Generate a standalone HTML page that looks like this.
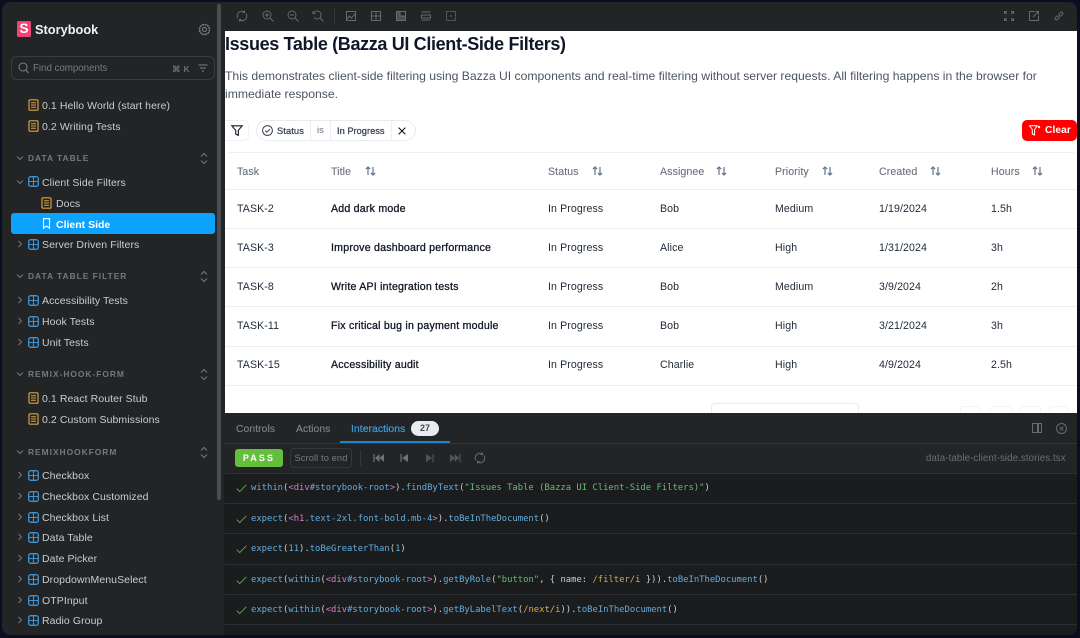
<!DOCTYPE html>
<html><head><meta charset="utf-8"><style>
*{box-sizing:border-box}
html,body{margin:0;padding:0;width:1080px;height:638px;overflow:hidden;background:#0a0e1f;font-family:"Liberation Sans",sans-serif}
.a,.t{position:absolute}
.t{white-space:nowrap;line-height:14px;height:14px}
.s{font-size:10.5px;color:#c9cdcf;letter-spacing:.08px;margin-top:1px}
.h{font-size:8.4px;font-weight:700;color:#74797e;letter-spacing:1px}
.c{font-size:10.6px;color:#6b7280;letter-spacing:.1px;margin-top:1px;-webkit-text-stroke:.12px #6b7280}
.d{font-size:10.6px;color:#1f2937;letter-spacing:.1px;margin-top:1px}
.b{font-size:10.6px;color:#111827;letter-spacing:.22px;margin-top:1px;-webkit-text-stroke:.3px #111827}
.m{font-family:"DejaVu Sans Mono","Liberation Mono",monospace;font-size:8.87px;color:#c9cdcf}
.l{color:#62aee0}.p{color:#d080c2}.g{color:#66bd72}.y{color:#d0ab62}.w{color:#c9cdcf}
.ln{position:absolute;height:1px;background:#eceef1;left:225px;width:852px}
.rl{position:absolute;left:225px;width:852px;height:1px;background:#2d2f31}
.tb{font-size:10.4px;color:#7e8387;letter-spacing:.05px;-webkit-text-stroke:.15px #7e8387}
svg{position:absolute;overflow:visible;fill:none}
.ti{stroke:#666b6f;stroke-width:1}
</style></head><body>
<svg width="0" height="0" style="position:absolute">
<defs>
<symbol id="doc" viewBox="0 0 11 12"><rect x="1" y=".8" width="9" height="10.4" rx="1" fill="none" stroke="#d9a13c" stroke-width="1.2"/><path d="M3 3.8h5M3 6h5M3 8.2h5" stroke="#d9a13c" stroke-width="1"/></symbol>
<symbol id="cmp" viewBox="0 0 11 11"><rect x=".7" y=".7" width="9.6" height="9.6" rx="2" fill="none" stroke="#3d94d6" stroke-width="1.3"/><path d="M5.5 1v9M1 5.5h9" stroke="#3d94d6" stroke-width="1.1"/></symbol>
<symbol id="rt" viewBox="0 0 6 8"><path d="M1.5 1l3 3-3 3" fill="none" stroke="#74797e" stroke-width="1"/></symbol>
<symbol id="dn" viewBox="0 0 8 6"><path d="M1 1.5l3 3 3-3" fill="none" stroke="#74797e" stroke-width="1"/></symbol>
<symbol id="ud" viewBox="0 0 8 13"><path d="M1 4.5l3-3 3 3M1 8.5l3 3 3-3" fill="none" stroke="#74797e" stroke-width="1"/></symbol>
<symbol id="sort" viewBox="0 0 11 10"><path d="M3 9V1M.9 3.1L3 1l2.100 2.100M8 1v8M5.900 6.900L8 9l2.100-2.100" fill="none" stroke="#64748b" stroke-width="1.200"/></symbol>
<symbol id="ck" viewBox="0 0 11 9"><path d="M.7 4.600l3 3L10.300.8" fill="none" stroke="#62a542" stroke-width=".9"/></symbol>
</defs></svg>

<!-- window -->
<div class="a" style="left:2px;top:2px;width:1075px;height:633px;background:#222425;border-radius:8px;overflow:hidden"></div>

<!-- sidebar -->
<div class="a" style="left:17px;top:21px;width:14px;height:16px;background:#ef4474;border-radius:1.5px"></div>
<div class="t" style="left:19.500px;top:22px;font-size:13.500px;font-weight:700;color:#fff">S</div>
<div class="t" style="left:35px;top:23px;font-size:12.800px;font-weight:700;color:#f1f2f3">Storybook</div>
<svg style="left:198px;top:23px" width="13" height="13" viewBox="0 0 13 13"><circle cx="6.500" cy="6.500" r="2" stroke="#7e8387"/><circle cx="6.500" cy="6.500" r="5" stroke="#7e8387" stroke-width="1.400" stroke-dasharray="2 .6"/></svg>

<div class="a" style="left:11px;top:56px;width:204px;height:24px;border:1px solid #3a3d40;border-radius:6px"></div>
<svg style="left:18px;top:62px" width="11" height="12" viewBox="0 0 11 12"><circle cx="5" cy="5" r="4" stroke="#7e8387"/><path d="M8 8l2.500 3" stroke="#7e8387"/></svg>
<div class="t" style="left:33px;top:62px;font-size:9.800px;color:#767b80;letter-spacing:-.05px">Find components</div>
<div class="t" style="left:172px;top:62px;font-size:8.500px;color:#696e72;letter-spacing:.3px;font-weight:700">⌘ K</div>
<svg style="left:198px;top:64px" width="10" height="8" viewBox="0 0 10 8"><path d="M.5 1h9M2 4h6M4 7h2" stroke="#7e8387"/></svg>

<svg style="left:28px;top:99px" width="11" height="12"><use href="#doc"/></svg><div class="t s" style="left:42px;top:98px">0.1 Hello World (start here)</div>
<svg style="left:28px;top:120px" width="11" height="12"><use href="#doc"/></svg><div class="t s" style="left:42px;top:119px">0.2 Writing Tests</div>

<svg style="left:16px;top:155px" width="8" height="6"><use href="#dn"/></svg><div class="t h" style="left:28px;top:151px">DATA TABLE</div><svg style="left:200px;top:152px" width="8" height="13"><use href="#ud"/></svg>
<svg style="left:16px;top:179px" width="8" height="6"><use href="#dn"/></svg><svg style="left:28px;top:176px" width="11" height="11"><use href="#cmp"/></svg><div class="t s" style="left:42px;top:175px">Client Side Filters</div>
<svg style="left:41px;top:197px" width="11" height="12"><use href="#doc"/></svg><div class="t s" style="left:56px;top:196px">Docs</div>
<div class="a" style="left:11px;top:213px;width:204px;height:21px;background:#0ea2ff;border-radius:3px"></div>
<svg style="left:42px;top:218px" width="9" height="11" viewBox="0 0 9 11"><path d="M1.500.7h6v9.500L4.500 8l-3 2.200z" stroke="#fff" stroke-width="1.100"/></svg><div class="t s" style="left:56px;top:217px;color:#fff;font-weight:700;letter-spacing:0">Client Side</div>
<svg style="left:17px;top:240px" width="6" height="8"><use href="#rt"/></svg><svg style="left:28px;top:239px" width="11" height="11"><use href="#cmp"/></svg><div class="t s" style="left:42px;top:237px">Server Driven Filters</div>

<svg style="left:16px;top:273px" width="8" height="6"><use href="#dn"/></svg><div class="t h" style="left:28px;top:269px">DATA TABLE FILTER</div><svg style="left:200px;top:270px" width="8" height="13"><use href="#ud"/></svg>
<svg style="left:17px;top:296px" width="6" height="8"><use href="#rt"/></svg><svg style="left:28px;top:295px" width="11" height="11"><use href="#cmp"/></svg><div class="t s" style="left:42px;top:293px">Accessibility Tests</div>
<svg style="left:17px;top:317px" width="6" height="8"><use href="#rt"/></svg><svg style="left:28px;top:316px" width="11" height="11"><use href="#cmp"/></svg><div class="t s" style="left:42px;top:314px">Hook Tests</div>
<svg style="left:17px;top:338px" width="6" height="8"><use href="#rt"/></svg><svg style="left:28px;top:337px" width="11" height="11"><use href="#cmp"/></svg><div class="t s" style="left:42px;top:335px">Unit Tests</div>

<svg style="left:16px;top:371px" width="8" height="6"><use href="#dn"/></svg><div class="t h" style="left:28px;top:367px">REMIX-HOOK-FORM</div><svg style="left:200px;top:368px" width="8" height="13"><use href="#ud"/></svg>
<svg style="left:28px;top:392px" width="11" height="12"><use href="#doc"/></svg><div class="t s" style="left:42px;top:391px">0.1 React Router Stub</div>
<svg style="left:28px;top:413px" width="11" height="12"><use href="#doc"/></svg><div class="t s" style="left:42px;top:412px">0.2 Custom Submissions</div>

<svg style="left:16px;top:449px" width="8" height="6"><use href="#dn"/></svg><div class="t h" style="left:28px;top:445px">REMIXHOOKFORM</div><svg style="left:200px;top:446px" width="8" height="13"><use href="#ud"/></svg>
<svg style="left:17px;top:471px" width="6" height="8"><use href="#rt"/></svg><svg style="left:28px;top:470px" width="11" height="11"><use href="#cmp"/></svg><div class="t s" style="left:42px;top:468px">Checkbox</div>
<svg style="left:17px;top:492px" width="6" height="8"><use href="#rt"/></svg><svg style="left:28px;top:491px" width="11" height="11"><use href="#cmp"/></svg><div class="t s" style="left:42px;top:489px">Checkbox Customized</div>
<svg style="left:17px;top:513px" width="6" height="8"><use href="#rt"/></svg><svg style="left:28px;top:512px" width="11" height="11"><use href="#cmp"/></svg><div class="t s" style="left:42px;top:510px">Checkbox List</div>
<svg style="left:17px;top:533px" width="6" height="8"><use href="#rt"/></svg><svg style="left:28px;top:532px" width="11" height="11"><use href="#cmp"/></svg><div class="t s" style="left:42px;top:530px">Data Table</div>
<svg style="left:17px;top:554px" width="6" height="8"><use href="#rt"/></svg><svg style="left:28px;top:553px" width="11" height="11"><use href="#cmp"/></svg><div class="t s" style="left:42px;top:551px">Date Picker</div>
<svg style="left:17px;top:575px" width="6" height="8"><use href="#rt"/></svg><svg style="left:28px;top:574px" width="11" height="11"><use href="#cmp"/></svg><div class="t s" style="left:42px;top:572px">DropdownMenuSelect</div>
<svg style="left:17px;top:596px" width="6" height="8"><use href="#rt"/></svg><svg style="left:28px;top:595px" width="11" height="11"><use href="#cmp"/></svg><div class="t s" style="left:42px;top:593px">OTPInput</div>
<svg style="left:17px;top:616px" width="6" height="8"><use href="#rt"/></svg><svg style="left:28px;top:615px" width="11" height="11"><use href="#cmp"/></svg><div class="t s" style="left:42px;top:613px">Radio Group</div>

<div class="a" style="left:217px;top:4px;width:4px;height:496px;background:#4a4d50;border-radius:2px"></div>

<!-- top toolbar -->
<div class="a" style="left:334px;top:8px;width:1px;height:16px;background:#35383a"></div>
<svg class="ti" style="left:236px;top:10px" width="12" height="12" viewBox="0 0 12 12"><path d="M2 8.500A4.700 4.700 0 0 1 8.500 2M10 3.500A4.700 4.700 0 0 1 3.500 10M8.500.5V2.500H6.500M3.500 11.500V9.500H5.500"/></svg>
<svg class="ti" style="left:262px;top:10px" width="12" height="12" viewBox="0 0 12 12"><circle cx="5" cy="5" r="4"/><path d="M8 8l3.500 3.500M3 5h4M5 3v4"/></svg>
<svg class="ti" style="left:287px;top:10px" width="12" height="12" viewBox="0 0 12 12"><circle cx="5" cy="5" r="4"/><path d="M8 8l3.500 3.500M3 5h4"/></svg>
<svg class="ti" style="left:312px;top:10px" width="12" height="12" viewBox="0 0 12 12"><path d="M2 2.500A4 4 0 1 1 2 7.500M8 8l3.500 3.500M1 1v2.500h2.500"/></svg>
<svg class="ti" style="left:346px;top:11px" width="10" height="10" viewBox="0 0 10 10"><rect x=".5" y=".5" width="9" height="9"/><path d="M1 8l2.500-3 2 2L9 3"/></svg>
<svg class="ti" style="left:371px;top:11px" width="10" height="10" viewBox="0 0 10 10"><rect x=".5" y=".5" width="9" height="9"/><path d="M5 .5v9M.5 5h9"/></svg>
<svg class="ti" style="left:396px;top:11px" width="10" height="10" viewBox="0 0 10 10"><rect x=".5" y=".5" width="9" height="9" fill="#4b4f52"/><rect x="4" y=".5" width="5.500" height="4.500" fill="#222425"/></svg>
<svg class="ti" style="left:421px;top:11px" width="10" height="10" viewBox="0 0 10 10"><path d="M.5 1h9M.5 9h9M.5 4h9v3H.5z"/></svg>
<svg class="ti" style="left:446px;top:11px" width="10" height="10" viewBox="0 0 10 10"><rect x=".5" y=".5" width="9" height="9" stroke-dasharray="2 1"/><path d="M5 4v2"/></svg>
<svg class="ti" style="left:1004px;top:11px" width="10" height="10" viewBox="0 0 10 10"><path d="M.5 3V.5H3M7 .5h2.500V3M9.500 7v2.500H7M3 9.500H.5V7M1 1l2 2M9 1L7 3M9 9L7 7M1 9l2-2"/></svg>
<svg class="ti" style="left:1029px;top:11px" width="10" height="10" viewBox="0 0 10 10"><path d="M5.500.5H.5v9h9v-5M4 6L9.500.5M6.500.5h3v3"/></svg>
<svg class="ti" style="left:1054px;top:11px" width="10" height="10" viewBox="0 0 10 10"><path d="M4 6L6 4M3.500 4.500L1.500 6.500a1.400 1.400 0 0 0 2 2L5.500 6.500M4.500 3.500l2-2a1.400 1.400 0 0 1 2 2L6.500 5.500"/></svg>

<!-- preview -->
<div class="a" style="left:225px;top:31px;width:852px;height:382px;background:#fff"></div>
<div class="t" style="left:225px;top:33px;height:22px;line-height:22px;font-size:18px;font-weight:700;color:#0f172a;letter-spacing:-.35px">Issues Table (Bazza UI Client-Side Filters)</div>
<div class="t" style="left:225px;top:69px;font-size:12.180px;color:#4b5563">This demonstrates client-side filtering using Bazza UI components and real-time filtering without server requests. All filtering happens in the browser for</div>
<div class="t" style="left:225px;top:87px;font-size:12.180px;color:#4b5563">immediate response.</div>

<div class="a" style="left:225px;top:120px;width:24px;height:21px;border:1px solid #f0f1f3;border-left:0;border-radius:0 5px 5px 0"></div>
<svg style="left:231px;top:125px" width="12" height="11" viewBox="0 0 12 11"><path d="M.8.8h10.400L7.300 5.300v5L4.700 9V5.300z" stroke="#111827" stroke-width="1.100"/></svg>
<div class="a" style="left:256px;top:120px;width:160px;height:21px;border:1px solid #e8eaed;border-radius:11px"></div>
<div class="a" style="left:310px;top:120px;width:1px;height:21px;background:#eceef1"></div>
<div class="a" style="left:330px;top:120px;width:1px;height:21px;background:#eceef1"></div>
<div class="a" style="left:391px;top:120px;width:1px;height:21px;background:#eceef1"></div>
<svg style="left:262px;top:125px" width="11" height="11" viewBox="0 0 11 11"><circle cx="5.500" cy="5.500" r="4.900" stroke="#374151"/><path d="M3.300 5.600l1.600 1.600 2.900-3" stroke="#374151"/></svg>
<div class="t" style="left:277px;top:124px;font-size:9.300px;color:#374151;letter-spacing:.1px;-webkit-text-stroke:.25px #374151">Status</div>
<div class="t" style="left:317px;top:124px;font-size:9.500px;color:#6b7280">is</div>
<div class="t" style="left:337px;top:124px;font-size:9.300px;color:#374151;-webkit-text-stroke:.25px #374151">In Progress</div>
<svg style="left:398px;top:127px" width="8" height="8" viewBox="0 0 8 8"><path d="M.6.6l6.800 6.800M7.400.6L.6 7.400" stroke="#111827" stroke-width="1.100"/></svg>
<div class="a" style="left:1022px;top:120px;width:55px;height:21px;background:#fe0000;border-radius:5px"></div>
<svg style="left:1029px;top:125px" width="12" height="11" viewBox="0 0 12 11"><path d="M.6.8h7.500L5.600 4.500v5.500L3.300 9V4.500zM9 1l2 2M11 1L9 3" stroke="#fff" stroke-width="1"/></svg>
<div class="t" style="left:1045px;top:123.500px;font-size:10.200px;font-weight:700;color:#fff;letter-spacing:.1px">Clear</div>

<!-- table -->
<div class="a" style="left:225px;top:152px;width:852px;height:233px;border-top:1px solid #eceef1;border-radius:5px"></div>
<div class="ln" style="top:189px"></div><div class="ln" style="top:228px"></div><div class="ln" style="top:267px"></div><div class="ln" style="top:306px"></div><div class="ln" style="top:346px"></div><div class="ln" style="top:385px"></div>
<div class="t c" style="left:237px;top:164px">Task</div>
<div class="t c" style="left:331px;top:164px">Title</div><svg style="left:365px;top:166px" width="11" height="10"><use href="#sort"/></svg>
<div class="t c" style="left:548px;top:164px">Status</div><svg style="left:592px;top:166px" width="11" height="10"><use href="#sort"/></svg>
<div class="t c" style="left:660px;top:164px">Assignee</div><svg style="left:716px;top:166px" width="11" height="10"><use href="#sort"/></svg>
<div class="t c" style="left:775px;top:164px">Priority</div><svg style="left:822px;top:166px" width="11" height="10"><use href="#sort"/></svg>
<div class="t c" style="left:879px;top:164px">Created</div><svg style="left:930px;top:166px" width="11" height="10"><use href="#sort"/></svg>
<div class="t c" style="left:991px;top:164px">Hours</div><svg style="left:1032px;top:166px" width="11" height="10"><use href="#sort"/></svg>

<div class="t d" style="left:237px;top:201px">TASK-2</div><div class="t b" style="left:331px;top:201px">Add dark mode</div><div class="t d" style="left:548px;top:201px">In Progress</div><div class="t d" style="left:660px;top:201px">Bob</div><div class="t d" style="left:775px;top:201px">Medium</div><div class="t d" style="left:879px;top:201px">1/19/2024</div><div class="t d" style="left:991px;top:201px">1.5h</div>
<div class="t d" style="left:237px;top:240px">TASK-3</div><div class="t b" style="left:331px;top:240px">Improve dashboard performance</div><div class="t d" style="left:548px;top:240px">In Progress</div><div class="t d" style="left:660px;top:240px">Alice</div><div class="t d" style="left:775px;top:240px">High</div><div class="t d" style="left:879px;top:240px">1/31/2024</div><div class="t d" style="left:991px;top:240px">3h</div>
<div class="t d" style="left:237px;top:279px">TASK-8</div><div class="t b" style="left:331px;top:279px">Write API integration tests</div><div class="t d" style="left:548px;top:279px">In Progress</div><div class="t d" style="left:660px;top:279px">Bob</div><div class="t d" style="left:775px;top:279px">Medium</div><div class="t d" style="left:879px;top:279px">3/9/2024</div><div class="t d" style="left:991px;top:279px">2h</div>
<div class="t d" style="left:237px;top:318px">TASK-11</div><div class="t b" style="left:331px;top:318px">Fix critical bug in payment module</div><div class="t d" style="left:548px;top:318px">In Progress</div><div class="t d" style="left:660px;top:318px">Bob</div><div class="t d" style="left:775px;top:318px">High</div><div class="t d" style="left:879px;top:318px">3/21/2024</div><div class="t d" style="left:991px;top:318px">3h</div>
<div class="t d" style="left:237px;top:357px">TASK-15</div><div class="t b" style="left:331px;top:357px">Accessibility audit</div><div class="t d" style="left:548px;top:357px">In Progress</div><div class="t d" style="left:660px;top:357px">Charlie</div><div class="t d" style="left:775px;top:357px">High</div><div class="t d" style="left:879px;top:357px">4/9/2024</div><div class="t d" style="left:991px;top:357px">2.5h</div>

<div class="a" style="left:711px;top:403px;width:148px;height:12px;border:1px solid #e8eaed;border-radius:4px 4px 0 0"></div>
<div class="a" style="left:960px;top:406px;width:20px;height:9px;border:1px solid #f3f4f6;border-radius:3px 3px 0 0"></div>
<div class="a" style="left:990px;top:406px;width:22px;height:9px;border:1px solid #f3f4f6;border-radius:3px 3px 0 0"></div>
<div class="a" style="left:1019px;top:406px;width:22px;height:9px;border:1px solid #f3f4f6;border-radius:3px 3px 0 0"></div>
<div class="a" style="left:1049px;top:406px;width:20px;height:9px;border:1px solid #f3f4f6;border-radius:3px 3px 0 0"></div>

<!-- panel -->
<div class="a" style="left:224px;top:413px;width:853px;height:222px;background:#222425;border-radius:0 0 8px 0;overflow:hidden">
<div class="a" style="left:0;top:60px;width:853px;height:162px;background:#1b1c1e"></div>
</div>
<div class="rl" style="top:443px;background:#333537"></div>
<div class="rl" style="top:473px"></div>
<div class="rl" style="top:503px"></div>
<div class="rl" style="top:533px"></div>
<div class="rl" style="top:564px"></div>
<div class="rl" style="top:594px"></div>
<div class="rl" style="top:624px"></div>

<div class="t tb" style="left:236px;top:423px">Controls</div>
<div class="t tb" style="left:296px;top:423px">Actions</div>
<div class="t tb" style="left:351px;top:423px;color:#3b9fe0;-webkit-text-stroke:.2px #3b9fe0">Interactions</div>
<div class="a" style="left:411px;top:421px;width:28px;height:15px;background:#e8ebf0;border-radius:8px;color:#44484c;font-size:9px;font-weight:700;text-align:center;line-height:15px">27</div>
<div class="a" style="left:340px;top:441px;width:110px;height:2px;background:#1a86cf"></div>
<svg class="ti" style="left:1032px;top:423px" width="10" height="10" viewBox="0 0 10 10"><rect x=".5" y=".5" width="9" height="9"/><path d="M6 .5v9" stroke-width="2"/></svg>
<svg class="ti" style="left:1056px;top:423px" width="11" height="11" viewBox="0 0 11 11"><circle cx="5.500" cy="5.500" r="5"/><path d="M3.700 3.700l3.600 3.600M7.300 3.700L3.700 7.300"/></svg>

<div class="a" style="left:235px;top:449px;width:48px;height:18px;background:#66bf3c;border-radius:3px;color:#fff;font-size:9px;font-weight:700;letter-spacing:2.100px;text-align:center;line-height:18px">PASS</div>
<div class="a" style="left:290px;top:448px;width:62px;height:20px;border:1px solid #36393b;border-radius:4px;color:#767b80;font-size:9.300px;letter-spacing:.1px;text-align:center;line-height:18px">Scroll to end</div>
<div class="a" style="left:360px;top:450px;width:1px;height:16px;background:#35383a"></div>
<svg style="left:373px;top:453px" width="12" height="10" viewBox="0 0 12 10"><path d="M1 1v8" stroke="#6e7377" stroke-width="1.200"/><path d="M6.500 1L2 5l4.500 4zM11 1L6.500 5 11 9z" fill="#6e7377"/></svg>
<svg style="left:400px;top:453px" width="9" height="10" viewBox="0 0 9 10"><path d="M1 1v8" stroke="#6e7377" stroke-width="1.200"/><path d="M8 1L2 5l6 4z" fill="#6e7377"/></svg>
<svg style="left:425px;top:453px" width="9" height="10" viewBox="0 0 9 10"><path d="M8 1v8" stroke="#4f5356" stroke-width="1.200"/><path d="M1 1l6 4-6 4z" fill="#4f5356"/></svg>
<svg style="left:449px;top:453px" width="12" height="10" viewBox="0 0 12 10"><path d="M11 1v8" stroke="#4f5356" stroke-width="1.200"/><path d="M1 1l5 4-5 4zM5.500 1l5 4-5 4z" fill="#4f5356"/></svg>
<svg class="ti" style="left:474px;top:452px" width="12" height="12" viewBox="0 0 12 12"><path d="M2 8.500A4.700 4.700 0 0 1 8.500 2M10 3.500A4.700 4.700 0 0 1 3.500 10M8.500.5V2.500H6.500M3.500 11.500V9.500H5.500"/></svg>
<div class="t" style="left:926px;top:452px;font-size:9.700px;color:#6b7075;letter-spacing:.1px">data-table-client-side.stories.tsx</div>

<svg style="left:236px;top:484px" width="11" height="9"><use href="#ck"/></svg>
<div class="t m" style="left:251px;top:481px"><span class="l">within</span>(<span class="p">&lt;div</span><span class="l">#storybook-root</span><span class="p">&gt;</span>).<span class="l">findByText</span>(<span class="g">"Issues Table (Bazza UI Client-Side Filters)"</span>)</div>
<svg style="left:236px;top:515px" width="11" height="9"><use href="#ck"/></svg>
<div class="t m" style="left:251px;top:512px"><span class="l">expect</span>(<span class="p">&lt;h1</span><span class="l">.text-2xl.font-bold.mb-4</span><span class="p">&gt;</span>).<span class="l">toBeInTheDocument</span>()</div>
<svg style="left:236px;top:545px" width="11" height="9"><use href="#ck"/></svg>
<div class="t m" style="left:251px;top:542px"><span class="l">expect</span>(<span class="l">11</span>).<span class="l">toBeGreaterThan</span>(<span class="l">1</span>)</div>
<svg style="left:236px;top:576px" width="11" height="9"><use href="#ck"/></svg>
<div class="t m" style="left:251px;top:573px"><span class="l">expect</span>(<span class="l">within</span>(<span class="p">&lt;div</span><span class="l">#storybook-root</span><span class="p">&gt;</span>).<span class="l">getByRole</span>(<span class="g">"button"</span>, { name: <span class="y">/filter/i</span> })).<span class="l">toBeInTheDocument</span>()</div>
<svg style="left:236px;top:606px" width="11" height="9"><use href="#ck"/></svg>
<div class="t m" style="left:251px;top:603px"><span class="l">expect</span>(<span class="l">within</span>(<span class="p">&lt;div</span><span class="l">#storybook-root</span><span class="p">&gt;</span>).<span class="l">getByLabelText</span>(<span class="y">/next/i</span>)).<span class="l">toBeInTheDocument</span>()</div>
</body></html>
